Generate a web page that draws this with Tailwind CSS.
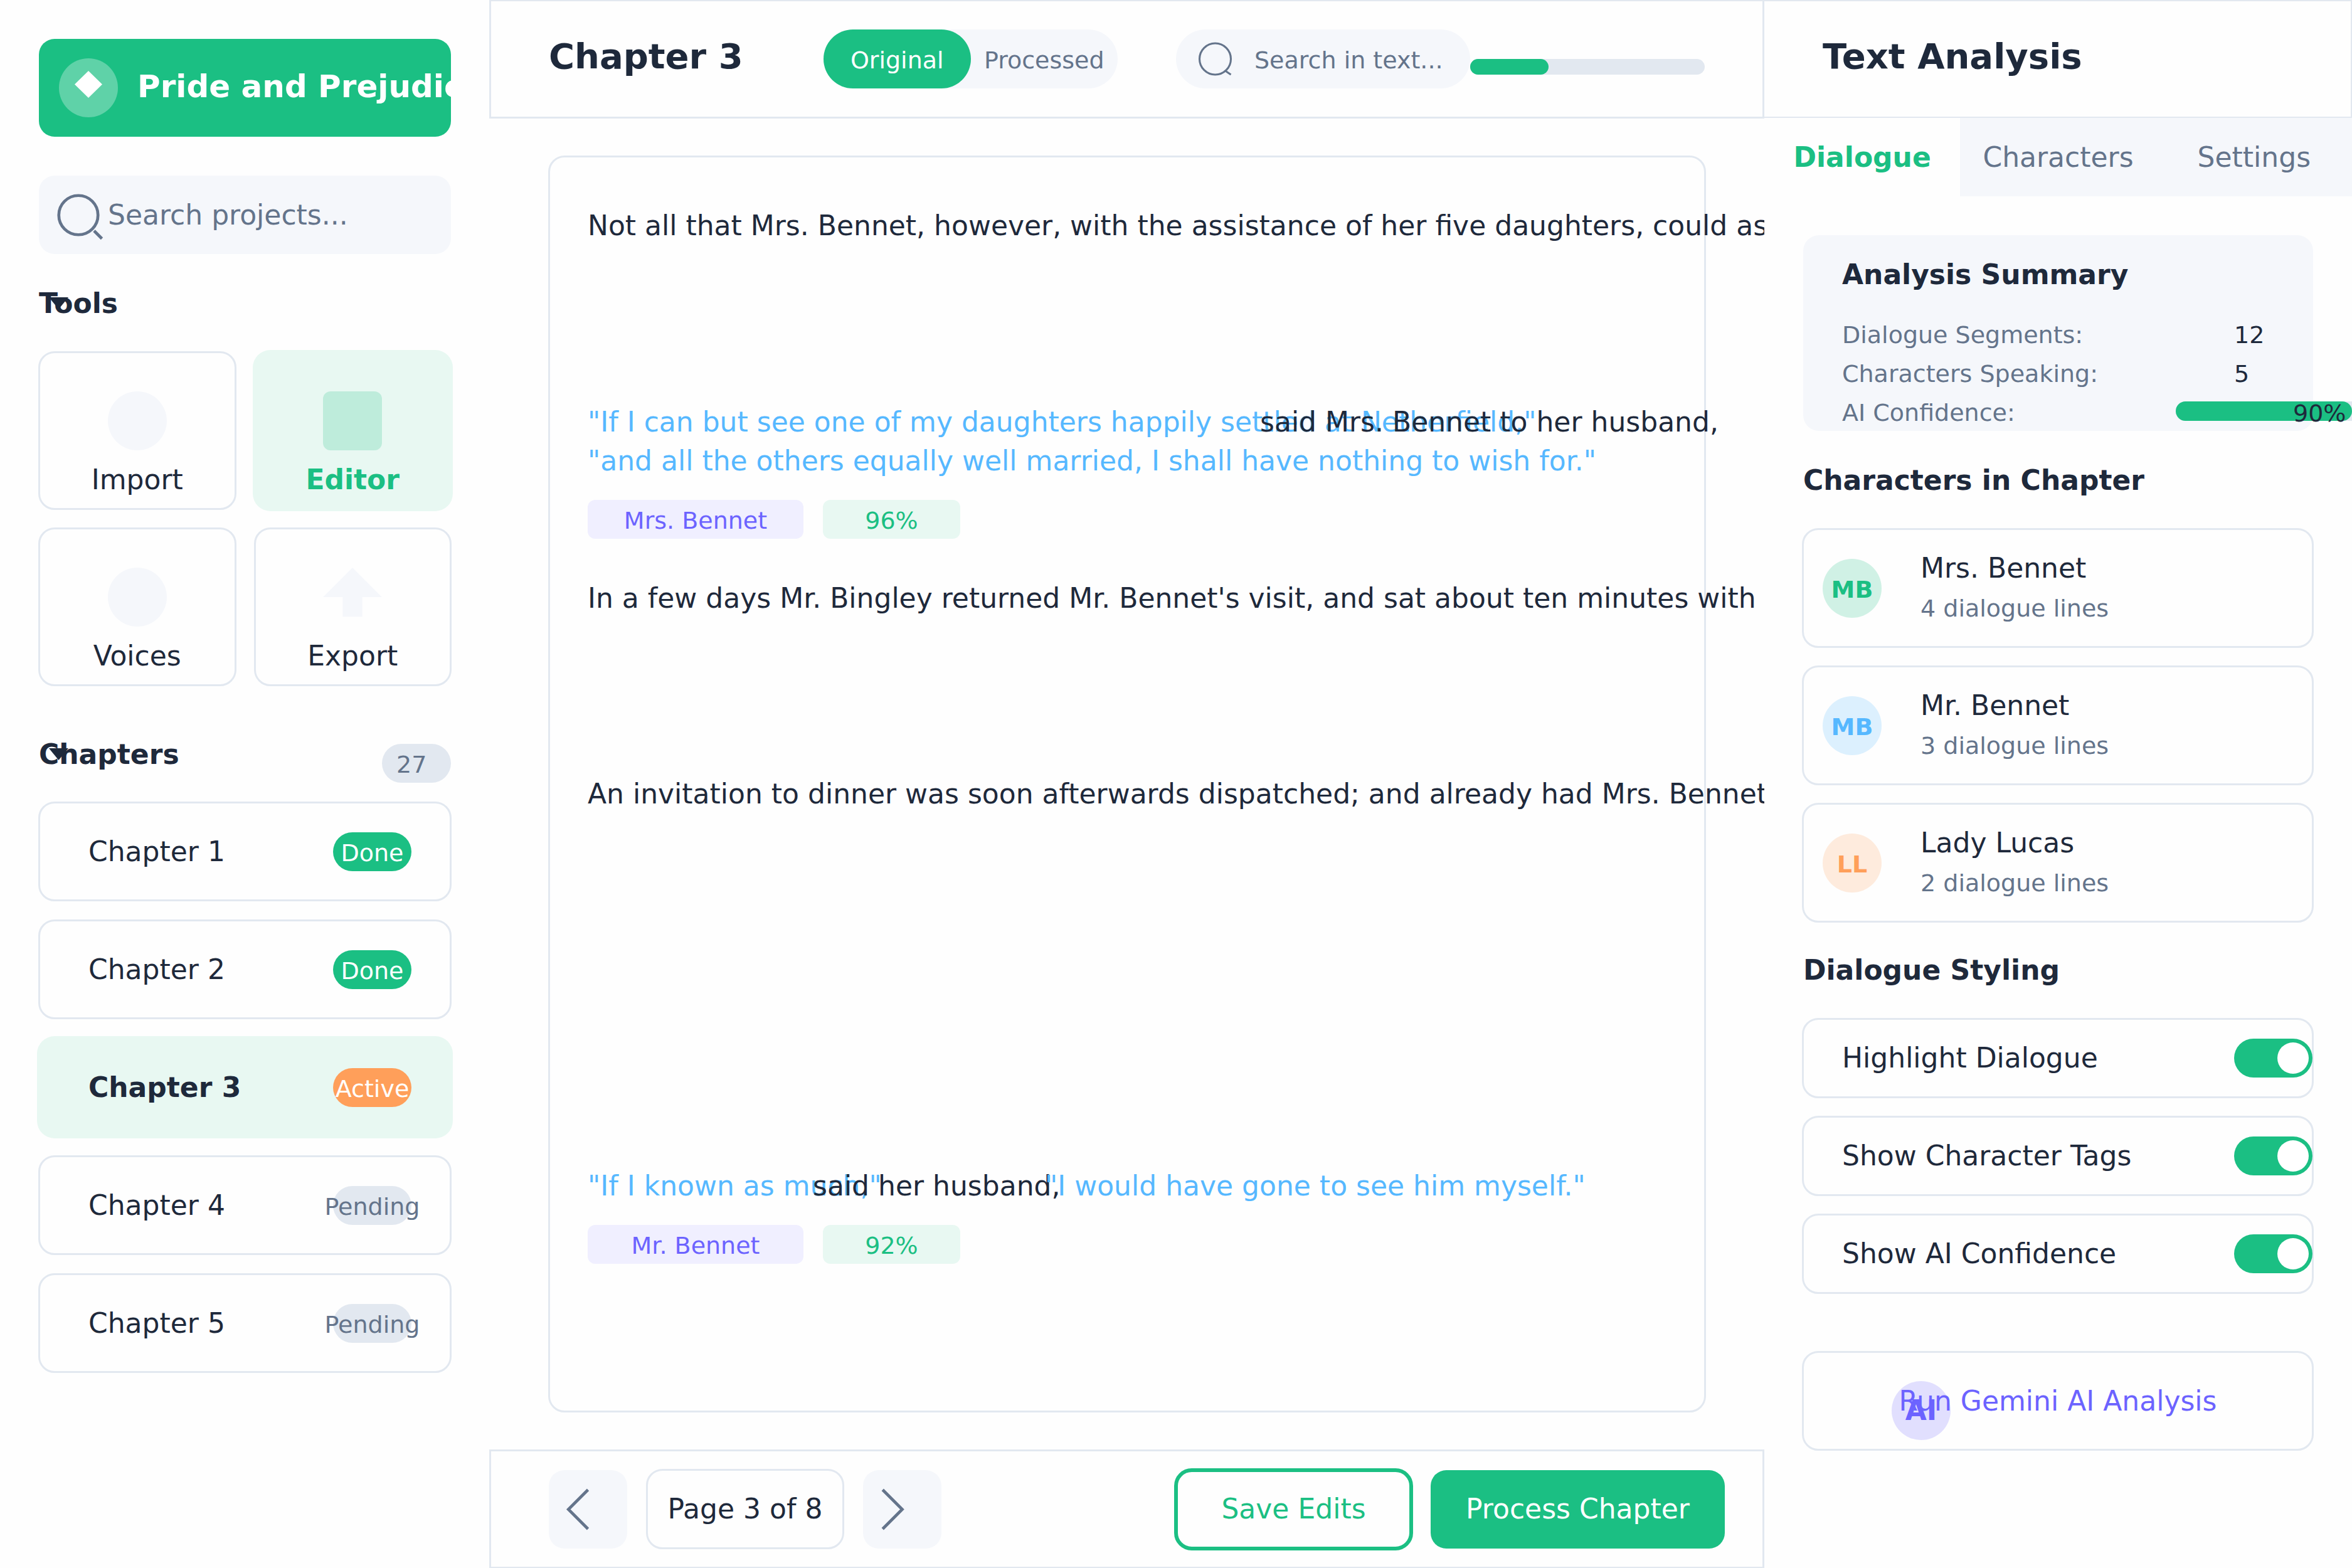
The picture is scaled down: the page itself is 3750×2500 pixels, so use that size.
<!DOCTYPE html>
<html lang="en">
<head>
<meta charset="utf-8">
<title>Pride and Prejudice – Editor</title>
<script src="https://cdn.jsdelivr.net/npm/@tailwindcss/browser@4"></script>
</head>
<body class="bg-[#fefefe] font-['DejaVu_Sans',sans-serif] text-[44px] leading-[62px] text-[#1e293b]">
<div class="flex min-h-screen w-full overflow-hidden">

  <!-- Sidebar -->
  <aside class="flex w-[780px] shrink-0 flex-col pt-[62px] pr-[60px] pl-[61px]">
    <div class="mx-px flex h-[156px] items-center gap-[31px] overflow-hidden rounded-[25px] bg-[#1bbf83] pl-8 text-white">
      <span class="flex size-[94px] shrink-0 items-center justify-center rounded-full bg-white/30 pb-3">
        <svg class="h-[43px] w-11" viewBox="0 0 44 43" fill="currentColor" aria-hidden="true"><path d="M22 0L44 21.500L22 43L0 21.500Z"/></svg>
      </span>
      <h1 class="pb-1 text-[50px] font-bold whitespace-nowrap">Pride and Prejudice</h1>
    </div>

    <label class="mx-px mt-[62px] flex h-[125px] items-center rounded-[25px] bg-[#f5f7fb]">
      <svg class="size-[110px] shrink-0 text-[#64748b]" viewBox="0 0 110 110" fill="none" stroke="currentColor" stroke-width="4.700" aria-hidden="true"><circle cx="63" cy="55" r="31.250"/><path d="M88 80L100.500 92.500"/></svg>
      <input type="text" placeholder="Search projects..." aria-label="Search projects" class="h-full w-[500px] bg-transparent outline-none placeholder:text-[#64748b]">
    </label>

    <h2 class="relative mx-px mt-12 font-bold">Tools
      <svg class="absolute top-[21px] left-4 h-[19px] w-[31px]" viewBox="0 0 31 19" fill="currentColor" aria-hidden="true"><path d="M0 0H31L15.500 19Z"/></svg>
    </h2>
    <div class="mt-[45px] grid grid-cols-2 gap-7">
      <button class="flex h-[253px] flex-col items-center gap-[21px] rounded-[26px] border-3 border-[#e2e8f0] pt-[61px] leading-[52px]">
        <span class="size-[94px] rounded-full bg-[#f5f7fb]"></span>Import
      </button>
      <button class="flex h-[253px] flex-col items-center gap-[21px] rounded-[26px] border-3 border-[#e8f8f2] bg-[#e8f8f2] pt-[61px] leading-[52px] font-bold text-[#1bbf83] ring-2 ring-[#e8f8f2]">
        <span class="size-[94px] rounded-[12px] bg-[#1bbf83]/20"></span>Editor
      </button>
      <button class="flex h-[253px] flex-col items-center gap-[21px] rounded-[26px] border-3 border-[#e2e8f0] pt-[61px] leading-[52px]">
        <span class="size-[94px] rounded-full bg-[#f5f7fb]"></span>Voices
      </button>
      <button class="flex h-[253px] flex-col items-center gap-[21px] rounded-[26px] border-3 border-[#e2e8f0] pt-[61px] leading-[52px]">
        <svg class="size-[94px] text-[#f5f7fb]" viewBox="0 0 30 30" fill="currentColor" aria-hidden="true"><path d="M15 0L30 15H20V25H10V15H0Z"/></svg>Export
      </button>
    </div>

    <div class="relative mx-px mt-[78px] flex h-[62px] justify-between">
      <h2 class="font-bold">Chapters</h2>
      <svg class="absolute top-[21px] left-4 h-[19px] w-[31px]" viewBox="0 0 31 19" fill="currentColor" aria-hidden="true"><path d="M0 0H31L15.500 19Z"/></svg>
      <span class="mt-[14px] h-[62px] w-[110px] rounded-full bg-[#e2e8f0] pt-0.5 pl-[23px] text-[38px] leading-[62px] text-[#64748b]">27</span>
    </div>
    <nav class="mt-11 flex flex-col gap-[29px]">
      <a href="#" class="flex h-[159px] items-center justify-between rounded-[26px] border-3 border-[#e2e8f0] pr-[61px] pl-[77px]">Chapter 1
        <span class="flex h-[62px] w-[125px] items-center justify-center rounded-full bg-[#1bbf83] pt-1 text-[38px] text-white">Done</span></a>
      <a href="#" class="flex h-[159px] items-center justify-between rounded-[26px] border-3 border-[#e2e8f0] pr-[61px] pl-[77px]">Chapter 2
        <span class="flex h-[62px] w-[125px] items-center justify-center rounded-full bg-[#1bbf83] pt-1 text-[38px] text-white">Done</span></a>
      <a href="#" class="flex h-[159px] items-center justify-between rounded-[26px] border-3 border-[#e8f8f2] bg-[#e8f8f2] pr-[61px] pl-[77px] font-bold ring-2 ring-[#e8f8f2]">Chapter 3
        <span class="flex h-[62px] w-[125px] items-center justify-center rounded-full bg-[#ff9f5a] pt-1 text-[38px] font-normal text-white">Active</span></a>
      <a href="#" class="flex h-[159px] items-center justify-between rounded-[26px] border-3 border-[#e2e8f0] pr-[61px] pl-[77px]">Chapter 4
        <span class="flex h-[62px] w-[125px] items-center justify-center rounded-full bg-[#e2e8f0] pt-1 text-[38px] text-[#64748b]">Pending</span></a>
      <a href="#" class="flex h-[159px] items-center justify-between rounded-[26px] border-3 border-[#e2e8f0] pr-[61px] pl-[77px]">Chapter 5
        <span class="flex h-[62px] w-[125px] items-center justify-center rounded-full bg-[#e2e8f0] pt-1 text-[38px] text-[#64748b]">Pending</span></a>
    </nav>
  </aside>

  <!-- Editor -->
  <main class="flex min-w-0 flex-1 flex-col overflow-hidden">
    <header class="flex h-[189px] shrink-0 items-center border-x-3 border-t-2 border-b-3 border-[#e2e8f0] px-[92px]">
      <h2 class="w-[438px] shrink-0 pb-2 text-[56px] font-bold">Chapter 3</h2>
      <div class="flex h-[94px] w-[469px] shrink-0 rounded-full bg-[#f5f7fb] text-[38px]">
        <button class="flex-1 rounded-full bg-[#1bbf83] pt-1 text-white">Original</button>
        <button class="flex-1 pt-1 text-[#64748b]">Processed</button>
      </div>
      <label class="ml-[93px] flex h-[94px] w-[469px] shrink-0 items-center rounded-full bg-[#f5f7fb]">
        <svg class="h-[94px] w-[125px] shrink-0 text-[#64748b]" viewBox="0 0 125 94" fill="none" stroke="currentColor" stroke-width="3.100" aria-hidden="true"><circle cx="62.500" cy="47" r="25"/><path d="M78 65.500L87.500 72"/></svg>
        <input type="text" placeholder="Search in text..." aria-label="Search in text" class="h-full w-[320px] bg-transparent pt-1 text-[38px] outline-none placeholder:text-[#64748b]">
      </label>
      <div class="mt-6 h-[25px] flex-1 rounded-full bg-[#e2e8f0]"><div class="h-full w-1/3 rounded-full bg-[#1bbf83]"></div></div>
    </header>

    <div class="flex flex-1 py-[59px] pr-[93px] pl-[94px]">
      <article class="min-w-0 flex-1 rounded-[26px] border-3 border-[#e2e8f0] pt-[78px] pl-[60px] whitespace-nowrap">
        <p>Not all that Mrs. Bennet, however, with the assistance of her five daughters, could as</p>
        <p class="mt-[251px] flex"><span class="w-[1072px] shrink-0 text-[#56b8ff]">"If I can but see one of my daughters happily settled at Netherfield,"</span><span>said Mrs. Bennet to her husband,</span></p>
        <p class="text-[#56b8ff]">"and all the others equally well married, I shall have nothing to wish for."</p>
        <div class="mt-[31px] flex gap-[31px] text-[38px]">
          <span class="flex h-[62px] w-[344px] items-center justify-center rounded-[12px] bg-[#f0efff] pt-1 text-[#6c63ff]">Mrs. Bennet</span>
          <span class="flex h-[62px] w-[219px] items-center justify-center rounded-[12px] bg-[#e8f8f2] pt-1 text-[#1bbf83]">96%</span>
        </div>
        <p class="mt-16">In a few days Mr. Bingley returned Mr. Bennet's visit, and sat about ten minutes with him</p>
        <p class="mt-[250px]">An invitation to dinner was soon afterwards dispatched; and already had Mrs. Bennet</p>
        <p class="mt-[563px] flex"><span class="w-[359px] shrink-0 text-[#56b8ff]">"If I known as much,"</span><span class="w-[370px] shrink-0">said her husband,</span><span class="text-[#56b8ff]">"I would have gone to see him myself."</span></p>
        <div class="mt-[31px] flex gap-[31px] text-[38px]">
          <span class="flex h-[62px] w-[344px] items-center justify-center rounded-[12px] bg-[#f0efff] pt-1 text-[#6c63ff]">Mr. Bennet</span>
          <span class="flex h-[62px] w-[219px] items-center justify-center rounded-[12px] bg-[#e8f8f2] pt-1 text-[#1bbf83]">92%</span>
        </div>
      </article>
    </div>

    <footer class="flex h-[189px] shrink-0 items-center border-x-3 border-t-3 border-b-2 border-[#e2e8f0] pr-[60px] pl-[92px]">
      <button aria-label="Previous page" class="size-[125px] rounded-[25px] bg-[#f5f7fb] text-[#64748b]">
        <svg class="size-full" viewBox="0 0 40 40" fill="none" stroke="currentColor" stroke-width="1.500" aria-hidden="true"><path d="M20 10L10 20L20 30"/></svg>
      </button>
      <span class="mx-[30px] flex h-32 w-[316px] items-center justify-center rounded-[26px] border-3 border-[#e2e8f0]">Page 3 of 8</span>
      <button aria-label="Next page" class="size-[125px] rounded-[25px] bg-[#f5f7fb] text-[#64748b]">
        <svg class="size-full" viewBox="0 0 40 40" fill="none" stroke="currentColor" stroke-width="1.500" aria-hidden="true"><path d="M10 10L20 20L10 30"/></svg>
      </button>
      <button class="mr-7 ml-auto h-[131px] w-[381px] rounded-[28px] border-6 border-[#1bbf83] text-[#1bbf83]">Save Edits</button>
      <button class="h-[125px] w-[469px] rounded-[25px] bg-[#1bbf83] text-white">Process Chapter</button>
    </footer>
  </main>

  <!-- Analysis -->
  <aside class="flex w-[937px] shrink-0 flex-col overflow-hidden">
    <header class="flex h-[188px] items-center border-t-2 border-r-2 border-b-2 border-[#e2e8f0] pl-[93px]">
      <h2 class="pb-2 text-[56px] font-bold">Text Analysis</h2>
    </header>
    <div class="grid h-[125px] grid-cols-3 bg-[#f5f7fb] text-[#64748b]">
      <button class="bg-[#fefefe] font-bold text-[#1bbf83]">Dialogue</button>
      <button>Characters</button>
      <button>Settings</button>
    </div>

    <section class="mx-[62px] mt-[62px] h-[312px] rounded-[25px] bg-[#f5f7fb] pt-8 pl-[62px]">
      <h3 class="font-bold">Analysis Summary</h3>
      <dl class="mt-[34px] text-[38px]">
        <div class="flex"><dt class="w-[625px] text-[#64748b]">Dialogue Segments:</dt><dd>12</dd></div>
        <div class="flex"><dt class="w-[625px] text-[#64748b]">Characters Speaking:</dt><dd>5</dd></div>
        <div class="flex"><dt class="w-[532px] shrink-0 text-[#64748b]">AI Confidence:</dt>
          <dd class="mt-[13px] h-[31px] w-[312px] shrink-0 rounded-full bg-[#e2e8f0]"><div class="flex h-full w-[90%] items-center rounded-full bg-[#1bbf83] pt-1.5 pl-[187px]">90%</div></dd></div>
      </dl>
    </section>

    <div class="mr-[61px] ml-[60px] flex flex-col">
      <h3 class="mt-12 mb-[45px] pl-0.5 font-bold">Characters in Chapter</h3>
      <ul class="flex flex-col gap-7">
        <li class="flex h-[191px] items-center gap-[62px] rounded-[26px] border-3 border-[#e2e8f0] pl-[30px]">
          <span class="flex size-[94px] items-center justify-center rounded-full bg-[#1bbf83]/20 pt-1 text-[38px] font-bold text-[#1bbf83]">MB</span>
          <div><p>Mrs. Bennet</p><p class="mt-0.5 text-[38px] text-[#64748b]">4 dialogue lines</p></div>
        </li>
        <li class="flex h-[191px] items-center gap-[62px] rounded-[26px] border-3 border-[#e2e8f0] pl-[30px]">
          <span class="flex size-[94px] items-center justify-center rounded-full bg-[#56b8ff]/20 pt-1 text-[38px] font-bold text-[#56b8ff]">MB</span>
          <div><p>Mr. Bennet</p><p class="mt-0.5 text-[38px] text-[#64748b]">3 dialogue lines</p></div>
        </li>
        <li class="flex h-[191px] items-center gap-[62px] rounded-[26px] border-3 border-[#e2e8f0] pl-[30px]">
          <span class="flex size-[94px] items-center justify-center rounded-full bg-[#ff9f5a]/20 pt-1 text-[38px] font-bold text-[#ff9f5a]">LL</span>
          <div><p>Lady Lucas</p><p class="mt-0.5 text-[38px] text-[#64748b]">2 dialogue lines</p></div>
        </li>
      </ul>

      <h3 class="my-[45px] pl-0.5 font-bold">Dialogue Styling</h3>
      <div class="flex flex-col gap-7">
        <label class="flex h-32 items-center justify-between rounded-[26px] border-3 border-[#e2e8f0] pl-[61px]">Highlight Dialogue
          <input type="checkbox" checked class="-mr-px flex h-[62px] w-[125px] appearance-none items-center rounded-full bg-[#e2e8f0] px-1.5 before:size-[50px] before:rounded-full before:bg-white checked:justify-end checked:bg-[#1bbf83]"></label>
        <label class="flex h-32 items-center justify-between rounded-[26px] border-3 border-[#e2e8f0] pl-[61px]">Show Character Tags
          <input type="checkbox" checked class="-mr-px flex h-[62px] w-[125px] appearance-none items-center rounded-full bg-[#e2e8f0] px-1.5 before:size-[50px] before:rounded-full before:bg-white checked:justify-end checked:bg-[#1bbf83]"></label>
        <label class="flex h-32 items-center justify-between rounded-[26px] border-3 border-[#e2e8f0] pl-[61px]">Show AI Confidence
          <input type="checkbox" checked class="-mr-px flex h-[62px] w-[125px] appearance-none items-center rounded-full bg-[#e2e8f0] px-1.5 before:size-[50px] before:rounded-full before:bg-white checked:justify-end checked:bg-[#1bbf83]"></label>
      </div>

      <button class="relative mt-[91px] h-[159px] rounded-[26px] border-3 border-[#e2e8f0] text-[#6c63ff]">
        <span class="absolute top-[45px] left-[140px] flex size-[94px] items-center justify-center rounded-full bg-[#6c63ff]/20 font-bold">AI</span>
        Run Gemini AI Analysis
      </button>
    </div>
  </aside>
</div>
</body>
</html>
